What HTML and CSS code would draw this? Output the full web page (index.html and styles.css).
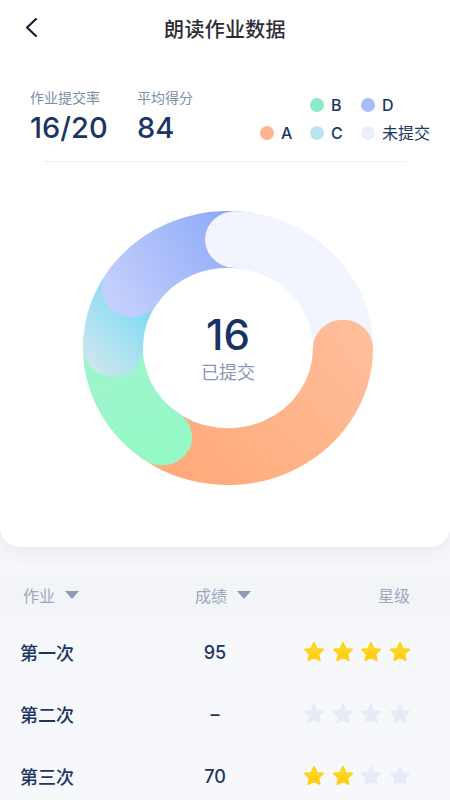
FILE: index.html
```html
<!DOCTYPE html>
<html lang="zh-CN">
<head>
    <meta charset="UTF-8">
    <meta name="viewport" content="width=device-width, initial-scale=1.0">
    <title>朗读作业数据</title>
    <link rel="stylesheet" href="styles.css">
</head>
<body>

    <svg class="defs" width="0" height="0">
        <defs>
            <linearGradient id="starGold" x1="0" y1="0" x2="0" y2="1">
                <stop offset="0" stop-color="#ffe43c"/>
                <stop offset="1" stop-color="#ffc400"/>
            </linearGradient>
        </defs>
    </svg>

    <div class="card">
        <!-- Top bar -->
        <div class="nav">
            <svg class="back" width="14" height="22" viewBox="0 0 14 22">
                <path d="M11 2 L2 10.5 L11 19" fill="none" stroke="#15172a" stroke-width="2.1" stroke-linecap="round" stroke-linejoin="round"/>
            </svg>
            <h1>朗读作业数据</h1>
        </div>

        <!-- Summary numbers and legend -->
        <div class="stats">
            <div class="stat">
                <div class="stat-label">作业提交率</div>
                <div class="stat-value">16/20</div>
            </div>
            <div class="stat">
                <div class="stat-label">平均得分</div>
                <div class="stat-value">84</div>
            </div>
            <div class="legend">
                <span></span>
                <span class="legend-item"><i class="dot dot-b"></i>B</span>
                <span class="legend-item"><i class="dot dot-d"></i>D</span>
                <span class="legend-item"><i class="dot dot-a"></i>A</span>
                <span class="legend-item"><i class="dot dot-c"></i>C</span>
                <span class="legend-item"><i class="dot dot-n"></i>未提交</span>
            </div>
        </div>

        <div class="divider"></div>

        <!-- Donut chart -->
        <div class="donut">
            <svg width="290" height="274" viewBox="0 0 290 290" preserveAspectRatio="none">
                <defs>
                    <linearGradient id="gA" gradientUnits="userSpaceOnUse" x1="260" y1="120" x2="90" y2="270">
                        <stop offset="0" stop-color="#ffbd98"/>
                        <stop offset="1" stop-color="#ffaa7b"/>
                    </linearGradient>
                    <linearGradient id="gB" gradientUnits="userSpaceOnUse" x1="30" y1="150" x2="90" y2="250">
                        <stop offset="0" stop-color="#9ff4cd"/>
                        <stop offset="1" stop-color="#94f9c6"/>
                    </linearGradient>
                    <linearGradient id="gC" gradientUnits="userSpaceOnUse" x1="15" y1="170" x2="75" y2="115">
                        <stop offset="0" stop-color="#cbe6ee"/>
                        <stop offset="1" stop-color="#80daf3"/>
                    </linearGradient>
                    <linearGradient id="gD" gradientUnits="userSpaceOnUse" x1="45" y1="110" x2="165" y2="40">
                        <stop offset="0" stop-color="#c2cefc"/>
                        <stop offset="1" stop-color="#8daaf8"/>
                    </linearGradient>
                </defs>
                <g fill="none" stroke-width="60" stroke-linecap="round">
                    <path d="M152.02 30.21 A115 115 0 0 1 259.56 155.02" stroke="#f2f5fd"/>
                    <path d="M260 145 A115 115 0 0 1 71.08 233.09" stroke="url(#gA)"/>
                    <path d="M79.04 239.21 A115 115 0 0 1 30.44 134.98" stroke="url(#gB)"/>
                    <path d="M30 145 A115 115 0 0 1 54.38 74.19" stroke="url(#gC)"/>
                    <path d="M48.55 82.37 A115 115 0 0 1 162 31.26" stroke="url(#gD)"/>
                    <path d="M152.02 30.21 A115 115 0 0 1 202.5 45.41" stroke="#f2f5fd"/>
                </g>
            </svg>
            <div class="donut-center">
                <div class="donut-num">16</div>
                <div class="donut-label">已提交</div>
            </div>
        </div>
    </div>

    <!-- Score table -->
    <div class="table-head">
        <span class="th th-work">作业<i class="caret"></i></span>
        <span class="th th-score">成绩<i class="caret"></i></span>
        <span class="th th-star">星级</span>
    </div>

    <div class="rows">
        <div class="row">
            <span class="name">第一次</span>
            <span class="score">95</span>
            <span class="stars">
                <svg viewBox="0 0 24 24"><path class="on" d="M12 3 L14.7 8.9 L21 9.6 L16.3 13.9 L17.6 20.2 L12 17 L6.4 20.2 L7.7 13.9 L3 9.6 L9.3 8.9 Z"/></svg>
                <svg viewBox="0 0 24 24"><path class="on" d="M12 3 L14.7 8.9 L21 9.6 L16.3 13.9 L17.6 20.2 L12 17 L6.4 20.2 L7.7 13.9 L3 9.6 L9.3 8.9 Z"/></svg>
                <svg viewBox="0 0 24 24"><path class="on" d="M12 3 L14.7 8.9 L21 9.6 L16.3 13.9 L17.6 20.2 L12 17 L6.4 20.2 L7.7 13.9 L3 9.6 L9.3 8.9 Z"/></svg>
                <svg viewBox="0 0 24 24"><path class="on" d="M12 3 L14.7 8.9 L21 9.6 L16.3 13.9 L17.6 20.2 L12 17 L6.4 20.2 L7.7 13.9 L3 9.6 L9.3 8.9 Z"/></svg>
            </span>
        </div>
        <div class="row">
            <span class="name">第二次</span>
            <span class="score">–</span>
            <span class="stars">
                <svg viewBox="0 0 24 24"><path class="off" d="M12 3 L14.7 8.9 L21 9.6 L16.3 13.9 L17.6 20.2 L12 17 L6.4 20.2 L7.7 13.9 L3 9.6 L9.3 8.9 Z"/></svg>
                <svg viewBox="0 0 24 24"><path class="off" d="M12 3 L14.7 8.9 L21 9.6 L16.3 13.9 L17.6 20.2 L12 17 L6.4 20.2 L7.7 13.9 L3 9.6 L9.3 8.9 Z"/></svg>
                <svg viewBox="0 0 24 24"><path class="off" d="M12 3 L14.7 8.9 L21 9.6 L16.3 13.9 L17.6 20.2 L12 17 L6.4 20.2 L7.7 13.9 L3 9.6 L9.3 8.9 Z"/></svg>
                <svg viewBox="0 0 24 24"><path class="off" d="M12 3 L14.7 8.9 L21 9.6 L16.3 13.9 L17.6 20.2 L12 17 L6.4 20.2 L7.7 13.9 L3 9.6 L9.3 8.9 Z"/></svg>
            </span>
        </div>
        <div class="row">
            <span class="name">第三次</span>
            <span class="score">70</span>
            <span class="stars">
                <svg viewBox="0 0 24 24"><path class="on" d="M12 3 L14.7 8.9 L21 9.6 L16.3 13.9 L17.6 20.2 L12 17 L6.4 20.2 L7.7 13.9 L3 9.6 L9.3 8.9 Z"/></svg>
                <svg viewBox="0 0 24 24"><path class="on" d="M12 3 L14.7 8.9 L21 9.6 L16.3 13.9 L17.6 20.2 L12 17 L6.4 20.2 L7.7 13.9 L3 9.6 L9.3 8.9 Z"/></svg>
                <svg viewBox="0 0 24 24"><path class="off" d="M12 3 L14.7 8.9 L21 9.6 L16.3 13.9 L17.6 20.2 L12 17 L6.4 20.2 L7.7 13.9 L3 9.6 L9.3 8.9 Z"/></svg>
                <svg viewBox="0 0 24 24"><path class="off" d="M12 3 L14.7 8.9 L21 9.6 L16.3 13.9 L17.6 20.2 L12 17 L6.4 20.2 L7.7 13.9 L3 9.6 L9.3 8.9 Z"/></svg>
            </span>
        </div>
    </div>

</body>
</html>
```

FILE: styles.css
```css
/* Page */
body {
    margin: 0;
    background: #f7f8fb;
    font-family: 'Inter', 'Noto Sans CJK SC', sans-serif;
    color: #1c3563;
    width: 450px;
    height: 800px;
    overflow: hidden;
}

.defs {
    display: block;
    width: 0;
    height: 0;
}

/* White card on top */
.card {
    background: #fff;
    border-radius: 0 0 20px 20px;
    box-shadow: 0 6px 22px rgba(40, 60, 100, 0.07);
    padding-bottom: 62px;
}

/* Nav bar */
.nav {
    height: 56px;
    display: flex;
    align-items: center;
    justify-content: center;
    position: relative;
}

.back {
    position: absolute;
    left: 25px;
    top: 17px;
}

.nav h1 {
    margin: 0;
    font-size: 20px;
    font-weight: 500;
    color: #2a2d36;
    letter-spacing: 0.3px;
}

/* Summary */
.stats {
    display: flex;
    padding: 32px 20px 0 30px;
}

.stat {
    width: 107px;
}

.stat-label {
    font-size: 14px;
    line-height: 20px;
    color: #7d8da8;
}

.stat-value {
    margin-top: 3px;
    font-size: 29px;
    line-height: 34px;
    font-weight: 500;
    color: #1c3563;
}

.legend {
    margin-left: auto;
    margin-top: 5px;
    display: grid;
    grid-template-columns: 50px 51px auto;
    row-gap: 5px;
    font-size: 16px;
    line-height: 20px;
    font-weight: 500;
    color: #1c3563;
}

.legend-item {
    display: flex;
    align-items: center;
}

.dot {
    width: 14px;
    height: 14px;
    border-radius: 50%;
    margin-right: 7px;
}

.dot-a { background: #ffb590; }
.dot-b { background: #8ee9c7; }
.dot-c { background: #bde5ef; }
.dot-d { background: #a9bdf8; }
.dot-n { background: #eaeefd; }

.legend-item:last-child {
    font-weight: 400;
}

.divider {
    height: 1px;
    background: #eef0f4;
    margin: 16px 43px 0;
}

/* Donut */
.donut {
    display: grid;
    place-items: center;
    width: 290px;
    height: 274px;
    margin: 49px 0 0 83px;
}

.donut > * {
    grid-area: 1 / 1;
}

.donut svg {
    display: block;
}

.donut-center {
    text-align: center;
    margin-top: 2px;
}

.donut-num {
    font-size: 42px;
    line-height: 44px;
    font-weight: 500;
    color: #163463;
}

.donut-label {
    margin-top: 4px;
    font-size: 18px;
    line-height: 24px;
    color: #8797b3;
}

/* Table */
.table-head {
    margin-top: 28px;
    height: 40px;
    background: #f2f4f8;
    display: flex;
    align-items: center;
    padding: 0 40px 0 23px;
    font-size: 16px;
    color: #9aa8bf;
}

.th {
    display: flex;
    align-items: center;
}

.th-work {
    width: 172px;
}

.th-star {
    margin-left: auto;
}

.caret {
    width: 0;
    height: 0;
    border-left: 7.5px solid transparent;
    border-right: 7.5px solid transparent;
    border-top: 8px solid #8d9bb5;
    margin-left: 10px;
}

.rows {
    padding-top: 6px;
}

.row {
    height: 62px;
    display: flex;
    align-items: center;
    padding: 0 38px 0 20px;
}

.name {
    width: 135px;
    font-size: 18px;
    font-weight: 500;
    color: #1c3563;
}

.score {
    width: 120px;
    text-align: center;
    font-size: 18px;
    font-weight: 500;
    color: #1c3563;
}

.stars {
    margin-left: auto;
    display: flex;
    gap: 4.7px;
}

.stars svg {
    width: 24px;
    height: 24px;
    display: block;
}

.stars path {
    stroke-width: 2;
    stroke-linejoin: round;
}

.stars .on {
    fill: url(#starGold);
    stroke: #ffd21a;
}

.stars .off {
    fill: #e6ecf5;
    stroke: #e6ecf5;
}
```
